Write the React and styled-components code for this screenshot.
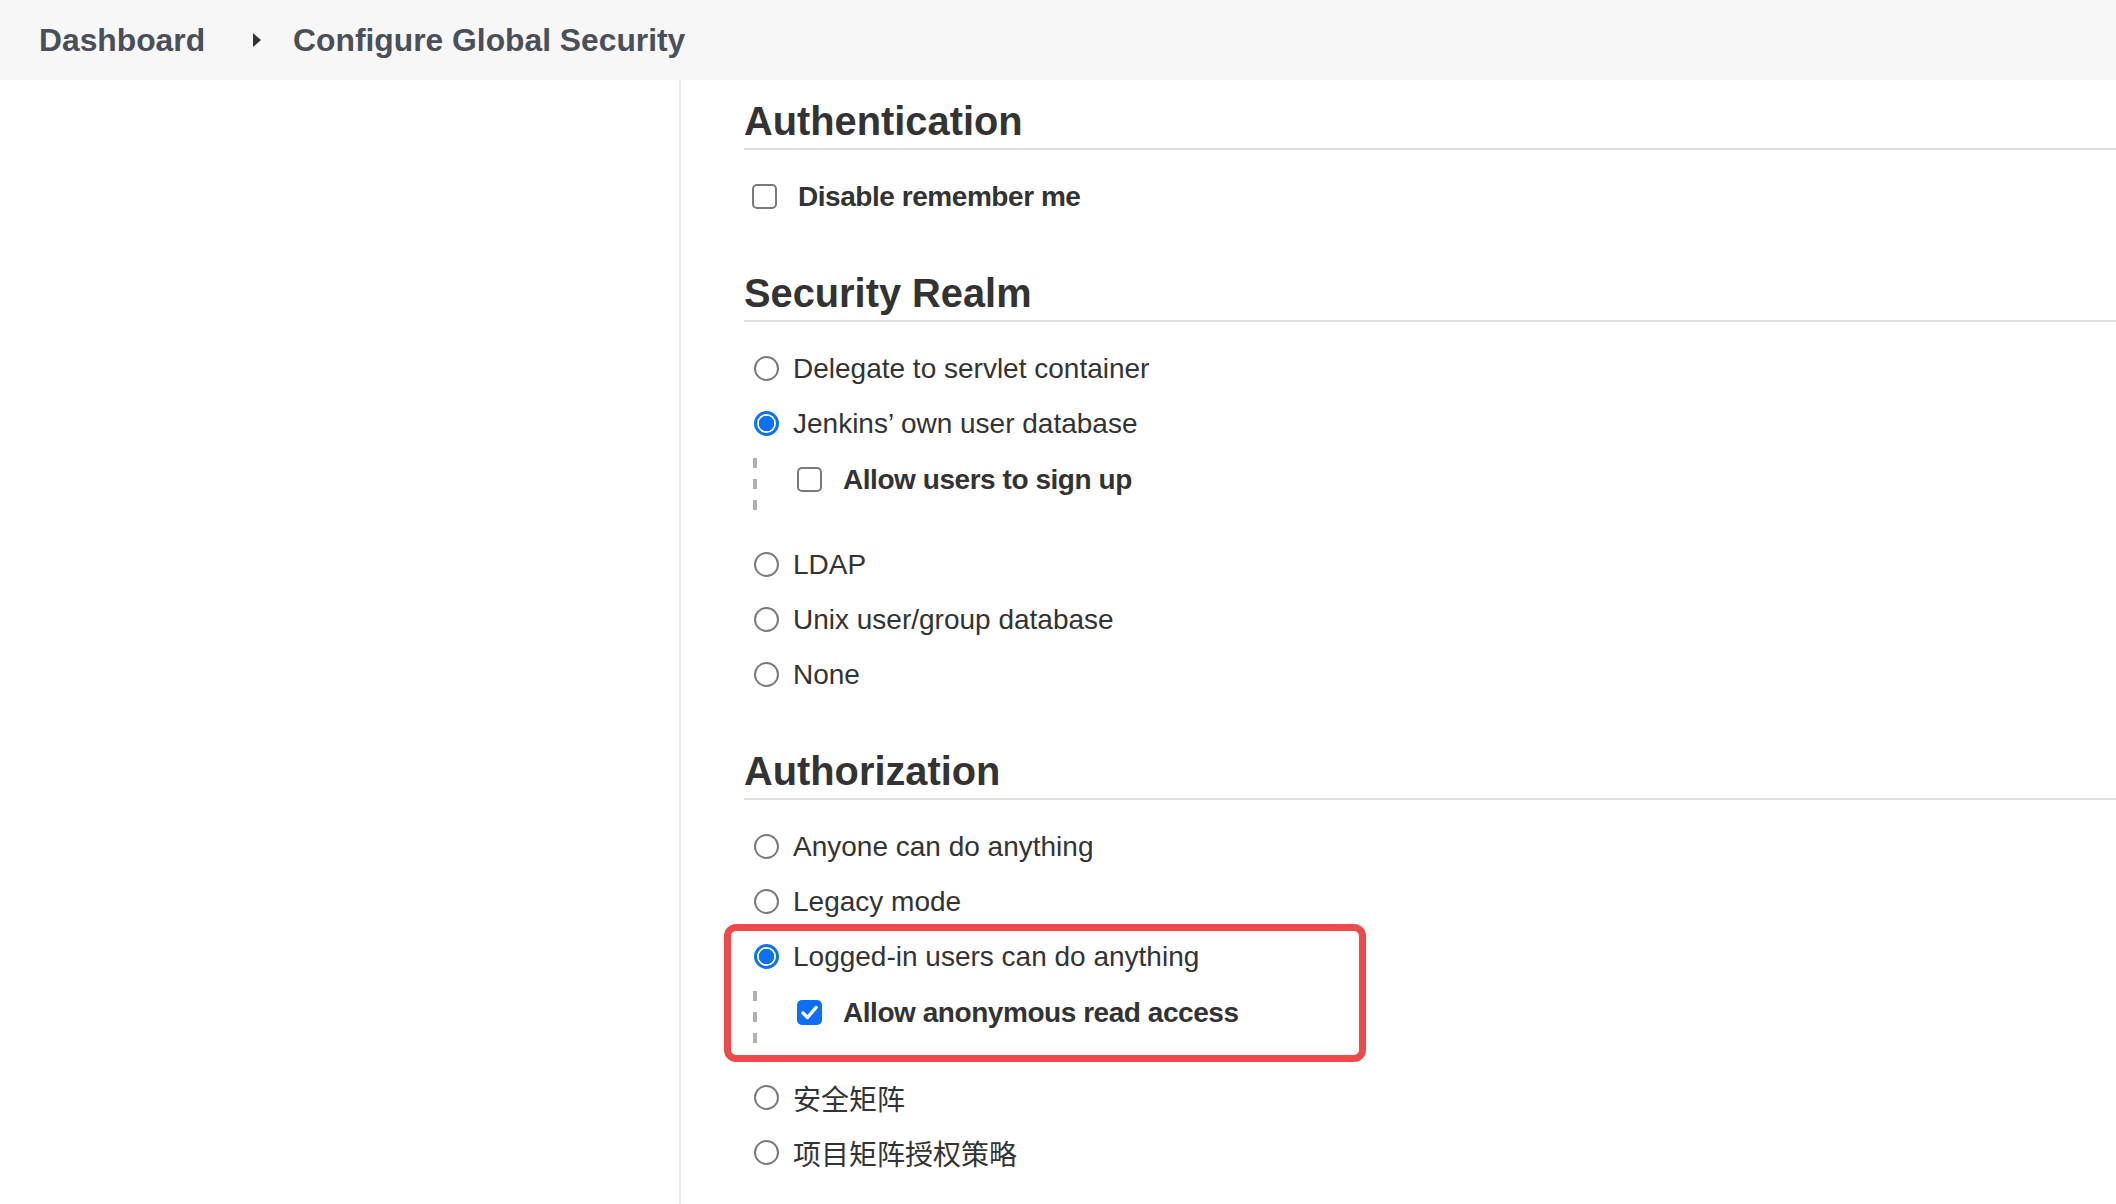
import styled, { createGlobalStyle } from "styled-components";

const GlobalStyle = createGlobalStyle`
	html,
	body {
		margin: 0;
		padding: 0;
		background: #ffffff;
		font-family: "Liberation Sans", Arial, sans-serif;
		color: #333333;
	}
`;

const Page = styled.div`
	display: flex;
	flex-direction: column;
	min-height: 1204px;
`;

const Breadcrumbs = styled.header`
	display: flex;
	align-items: center;
	height: 80px;
	padding-left: 39px;
	background-color: #f7f7f7;
	font-size: 31.8px;
	font-weight: 700;
	color: #4a4f58;
`;

const Crumb = styled.span`
	white-space: nowrap;
`;

const CrumbArrow = styled.span`
	width: 0;
	height: 0;
	margin: 0 32px 0 48px;
	border-top: 7px solid transparent;
	border-bottom: 7px solid transparent;
	border-left: 8px solid #333333;
`;

const Body = styled.div`
	display: flex;
	flex: 1;
`;

const SidePanel = styled.aside`
	width: 679px;
	flex-shrink: 0;
	border-right: 2px solid #e9ecef;
`;

const Main = styled.main`
	flex: 1;
	padding: 18px 0 0 63px;
`;

const Section = styled.section`
	& + & {
		margin-top: 46px;
	}
`;

const SectionTitle = styled.h2`
	margin: 0;
	padding-bottom: 4px;
	border-bottom: 2px solid #e0e0e0;
	font-size: 39.8px;
	line-height: 46px;
	font-weight: 700;
	color: #333333;
`;

const OptionList = styled.div`
	display: flex;
	flex-direction: column;
	margin-top: 19px;
`;

const OptionRow = styled.label`
	display: flex;
	align-items: center;
	height: 55px;
	font-size: 28px;
	font-weight: ${(p) => (p.$strong ? 700 : 400)};
	color: #333333;
	white-space: nowrap;
	font-family: "Liberation Sans", "Noto Sans CJK SC", sans-serif;
`;

const RadioMark = styled.span`
	box-sizing: border-box;
	width: 25px;
	height: 25px;
	margin: 0 14px 0 10px;
	border-radius: 50%;
	border: ${(p) => (p.$checked ? "3px solid #0b72f5" : "2px solid #7a7a7a")};
	background: ${(p) =>
		p.$checked
			? "radial-gradient(circle, #0b72f5 0 7.5px, #ffffff 8px)"
			: "#ffffff"};
	flex-shrink: 0;
`;

const CheckMark = styled.span`
	box-sizing: border-box;
	display: flex;
	align-items: center;
	justify-content: center;
	width: 25px;
	height: 25px;
	margin: 0 21px 0 ${(p) => p.$offset || 8}px;
	border-radius: 5px;
	border: ${(p) => (p.$checked ? "none" : "2px solid #7a7a7a")};
	background: ${(p) => (p.$checked ? "#0b6ff8" : "#ffffff")};
	flex-shrink: 0;
`;

const OptionLabel = styled.span`
	letter-spacing: ${(p) => (p.$strong ? "-0.45px" : "0")};
`;

const Nested = styled.div`
	display: flex;
	align-items: flex-start;
	height: 86px;
	padding-left: 9px;
`;

const Guide = styled.span`
	width: 4px;
	height: 55px;
	margin-top: 7px;
	flex-shrink: 0;
	background: repeating-linear-gradient(
		to bottom,
		#b0b0b0 0 10px,
		transparent 10px 21px
	);
`;

const NestedBody = styled.div`
	display: flex;
	flex-direction: column;
	padding-top: 1px;
`;

const Highlight = styled.div`
	position: relative;

	&::after {
		content: "";
		position: absolute;
		top: -5px;
		left: -20px;
		width: 642px;
		height: 138px;
		box-sizing: border-box;
		border: 7px solid #f04949;
		border-radius: 12px;
		pointer-events: none;
	}
`;

const Tick = () => (
	<svg width="17" height="15" viewBox="0 0 17 15">
		<path
			d="M2 8 L6.5 12.5 L15 2.5"
			fill="none"
			stroke="#ffffff"
			strokeWidth="3.4"
			strokeLinecap="round"
			strokeLinejoin="round"
		/>
	</svg>
);

const Radio = ({ checked, children }) => (
	<OptionRow>
		<RadioMark $checked={checked} />
		<OptionLabel>{children}</OptionLabel>
	</OptionRow>
);

const Checkbox = ({ checked, offset, children }) => (
	<OptionRow $strong>
		<CheckMark $checked={checked} $offset={offset}>
			{checked && <Tick />}
		</CheckMark>
		<OptionLabel $strong>{children}</OptionLabel>
	</OptionRow>
);

const SubOptions = ({ children }) => (
	<Nested>
		<Guide />
		<NestedBody>{children}</NestedBody>
	</Nested>
);

const App = () => {
	return (
		<Page>
			<GlobalStyle />
			<Breadcrumbs>
				<Crumb>Dashboard</Crumb>
				<CrumbArrow />
				<Crumb>Configure Global Security</Crumb>
			</Breadcrumbs>
			<Body>
				<SidePanel />
				<Main>
					<Section>
						<SectionTitle>Authentication</SectionTitle>
						<OptionList>
							<Checkbox>Disable remember me</Checkbox>
						</OptionList>
					</Section>

					<Section>
						<SectionTitle>Security Realm</SectionTitle>
						<OptionList>
							<Radio>Delegate to servlet container</Radio>
							<Radio checked>Jenkins’ own user database</Radio>
							<SubOptions>
								<Checkbox offset={40}>Allow users to sign up</Checkbox>
							</SubOptions>
							<Radio>LDAP</Radio>
							<Radio>Unix user/group database</Radio>
							<Radio>None</Radio>
						</OptionList>
					</Section>

					<Section>
						<SectionTitle>Authorization</SectionTitle>
						<OptionList>
							<Radio>Anyone can do anything</Radio>
							<Radio>Legacy mode</Radio>
							<Highlight>
								<Radio checked>Logged-in users can do anything</Radio>
								<SubOptions>
									<Checkbox checked offset={40}>
										Allow anonymous read access
									</Checkbox>
								</SubOptions>
							</Highlight>
							<Radio>安全矩阵</Radio>
							<Radio>项目矩阵授权策略</Radio>
						</OptionList>
					</Section>
				</Main>
			</Body>
		</Page>
	);
};

export default App;
